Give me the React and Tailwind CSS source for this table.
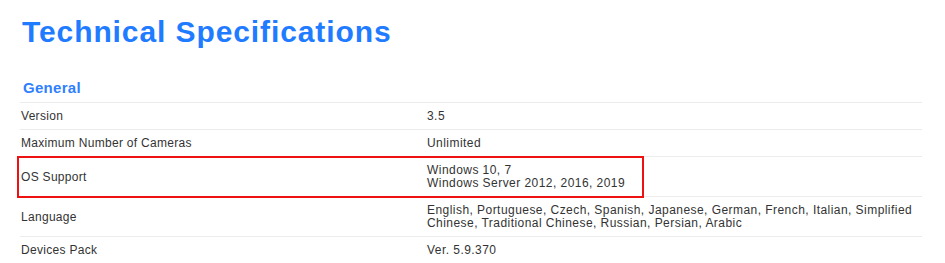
const rows = [
  { label: "Version", value: ["3.5"] },
  { label: "Maximum Number of Cameras", value: ["Unlimited"] },
  { label: "OS Support", value: ["Windows 10, 7", "Windows Server 2012, 2016, 2019"], marked: true },
  {
    label: "Language",
    value: [
      "English, Portuguese, Czech, Spanish, Japanese, German, French, Italian, Simplified Chinese, Traditional Chinese, Russian, Persian, Arabic",
    ],
  },
  { label: "Devices Pack", value: ["Ver. 5.9.370"] },
];

export default function App() {
  return (
    <div className="w-[945px] h-[263px] overflow-hidden bg-white pl-5 pr-[23px] pt-[14px] font-['Liberation_Sans',Arial,sans-serif]">
      <h1 className="pl-[2px] text-[30px] leading-[36px] font-bold tracking-[0.9px] text-[#1f7bff]">
        Technical Specifications
      </h1>
      <h2 className="mt-[29px] pl-[3px] text-[15px] leading-[18px] font-bold tracking-[0.3px] text-[#2f80ff]">General</h2>
      <div className="mt-[5px] border-t border-[#ececec]">
        {rows.map((r) => (
          <div
            key={r.label}
            className={`relative flex items-center border-b border-[#ececec] text-[12px] text-[#333] ${
              r.value.length > 1 || r.value[0].length > 80 ? "min-h-[40px]" : "h-[27px]"
            }`}
          >
            <div className="w-[407px] shrink-0 pl-[1px] tracking-[0.3px]">{r.label}</div>
            <div className="flex-1 pr-[4px] leading-[13px] tracking-[0.45px]">
              {r.value.map((v) => (
                <div key={v}>{v}</div>
              ))}
            </div>
            {r.marked && (
              <span className="pointer-events-none absolute -left-[3px] -top-[1px] h-[42px] w-[627px] border-2 border-[#ee1111]" />
            )}
          </div>
        ))}
      </div>
    </div>
  );
}
